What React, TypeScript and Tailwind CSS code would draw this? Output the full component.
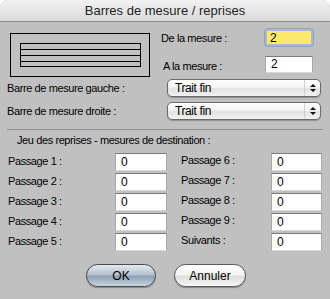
import React from "react";

const font = "font-['Liberation_Sans',Arial,sans-serif]";

function Field({ value, className = "" }: { value: string; className?: string }) {
  return (
    <div
      className={`flex h-[18px] items-center border border-t-[#7a7a7a] border-x-[#a9a9a9] border-b-[#d8d8d8] bg-white pl-[5px] text-[12px] text-black ${className}`}
    >
      {value}
    </div>
  );
}

function Select({ value }: { value: string }) {
  return (
    <div className="flex h-[18px] w-[154px] items-center rounded-[5px] border border-[#6a6a6a] bg-[linear-gradient(#ffffff,#f4f4f4_45%,#e2e2e2_55%,#f2f2f2)] shadow-[0_1px_1px_rgba(0,0,0,0.25)]">
      <span className="flex-1 pl-[7px] text-[12px] text-black">{value}</span>
      <span className="flex h-full w-[16px] flex-col items-center justify-center gap-[2px] border-l border-[#d0d0d0]">
        <svg width="6" height="3" viewBox="0 0 6 3">
          <path d="M0 3 L3 0 L6 3 Z" fill="#111" />
        </svg>
        <svg width="6" height="3" viewBox="0 0 6 3">
          <path d="M0 0 L6 0 L3 3 Z" fill="#111" />
        </svg>
      </span>
    </div>
  );
}

const passages = [
  ["Passage 1 :", "Passage 6 :"],
  ["Passage 2 :", "Passage 7 :"],
  ["Passage 3 :", "Passage 8 :"],
  ["Passage 4 :", "Passage 9 :"],
  ["Passage 5 :", "Suivants :"],
];

export default function App() {
  return (
    <div
      className={`h-[299px] w-[330px] overflow-hidden rounded-t-[8px] bg-[#c0c0c0] text-[11px] tracking-[-0.4px] text-black ${font}`}
    >
      <header className="flex h-[22px] items-center justify-center border-b border-[#8c8c8c] bg-[linear-gradient(#f2f2f2,#dadada)] text-[13px] tracking-normal text-[#222]">
        Barres de mesure / reprises
      </header>

      <section className="flex">
        <svg className="ml-[10px] mt-[11px]" width="140" height="44" viewBox="0 0 140 44">
          <rect x="0.5" y="0.5" width="139" height="43" fill="none" stroke="#000" />
          <rect x="10.5" y="10.5" width="120" height="23" fill="none" stroke="#000" />
          <line x1="10" y1="16.5" x2="131" y2="16.5" stroke="#000" />
          <line x1="10" y1="22.5" x2="131" y2="22.5" stroke="#000" />
          <line x1="10" y1="28.5" x2="131" y2="28.5" stroke="#000" />
        </svg>
        <div className="ml-[11px] flex flex-1 flex-col">
          <div className="mt-[7px] flex items-start">
            <span className="mt-[1px] w-[104px]">De la mesure :</span>
            <div className="rounded-[3px] p-[2px] shadow-[0_0_0_1px_#8fa3c0] bg-[#a9b9d0]">
              <div className="flex h-[13px] w-[44px] items-center bg-[#fbe86c] pl-[3px] text-[12px]">2</div>
            </div>
          </div>
          <div className="mt-[9px] flex items-start">
            <span className="ml-[2px] mt-[2px] w-[102px]">A la mesure :</span>
            <Field value="2" className="w-[48px] !h-[17px] pl-[4px]" />
          </div>
        </div>
      </section>

      <section className="mt-[2px] flex flex-col gap-[5px] pl-[7px]">
        <div className="flex items-center">
          <span className="w-[160px]">Barre de mesure gauche :</span>
          <Select value="Trait fin" />
        </div>
        <div className="flex items-center">
          <span className="w-[160px]">Barre de mesure droite :</span>
          <Select value="Trait fin" />
        </div>
      </section>

      <hr className="mx-[7px] mt-[9px] border-t border-[#8e8e8e]" />

      <p className="ml-[17px] mt-[3px] leading-[14px]">Jeu des reprises - mesures de destination :</p>

      <section className="mt-[6px] flex flex-col gap-[2px] pl-[8px]">
        {passages.map(([a, b]) => (
          <div key={a} className="flex items-center">
            <span className="mt-[-2px] w-[107px]">{a}</span>
            <Field value="0" className="w-[52px]" />
            <span className="ml-[14px] mt-[-4px] w-[90px]">{b}</span>
            <Field value="0" className="w-[51px]" />
          </div>
        ))}
      </section>

      <footer className="mt-[13px] flex justify-center gap-[18px] pl-[2px] tracking-normal">
        <button className="h-[23px] w-[70px] rounded-full border border-[#4a4a4a] bg-[linear-gradient(#e4eaf1,#b4c2d0_45%,#8ea2b6_55%,#c9d5e1)] text-[12px] text-black shadow-[0_1px_1px_rgba(0,0,0,0.3)]">
          OK
        </button>
        <button className="h-[23px] w-[72px] rounded-full border border-[#5a5a5a] bg-[linear-gradient(#ffffff,#f4f4f4_45%,#dedede_55%,#f7f7f7)] text-[12px] text-black shadow-[0_1px_1px_rgba(0,0,0,0.3)]">
          Annuler
        </button>
      </footer>
    </div>
  );
}
